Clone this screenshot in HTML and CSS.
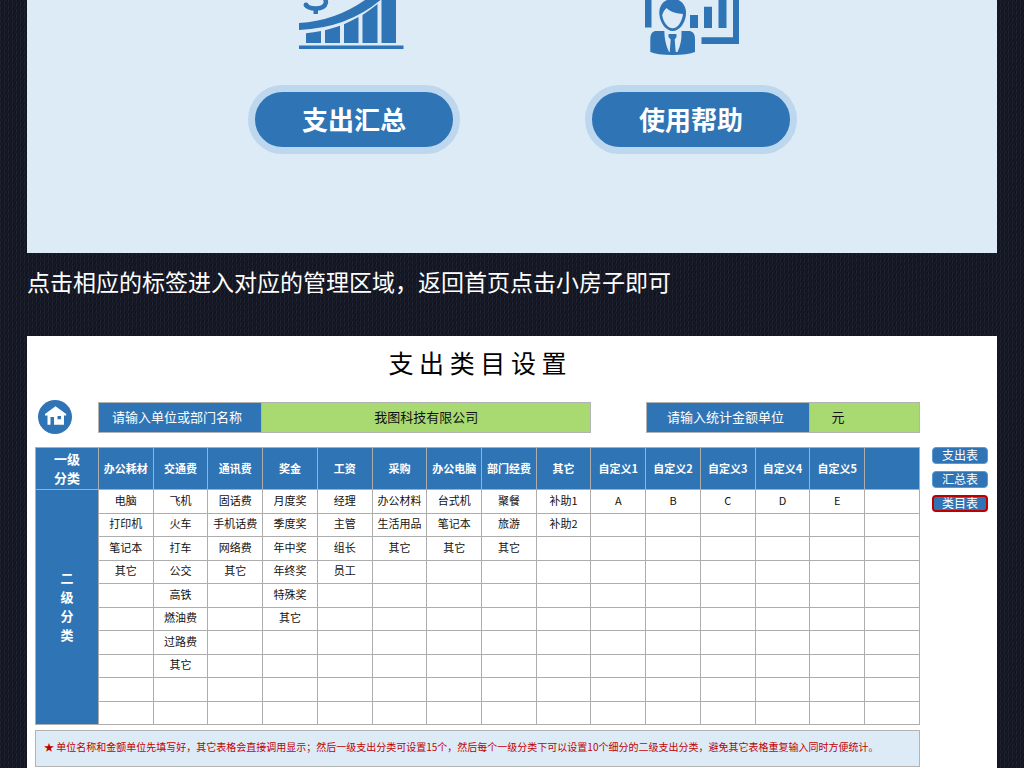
FILE: index.html
```html
<!DOCTYPE html>
<html lang="zh-CN">
<head>
<meta charset="utf-8">
<title>支出类目设置</title>
<link rel="stylesheet" href="styles.css">
</head>
<body>
<section class="menu">
  <div class="menu-item">
    <svg class="menu-icon" width="110" height="56" viewBox="300 0 110 56" aria-hidden="true">
      <path d="M300 45.500h104.500v3.500H300z"/>
      <path d="M307 33.200Q315 32.500 322 31v12h-15zM326 30.300Q333 28.500 341 25.800V43h-15zM345 24.200Q352 21 359.500 17v26H345zM363.500 15Q371 10 378.500 4v39h-15zM382.500 0H397v43h-14.500z"/>
      <path d="M300 23Q336 21 366 0H381.500Q348 28 300 30z"/>
      <path d="M306.500 4.200C309 9.500 325 10.500 326.800 3Q327.200 1.200 326 -1" fill="none" stroke="#2f74b5" stroke-width="4.500"/>
      <circle cx="307" cy="4.800" r="2.400"/>
      <path d="M314.500 8h4.500v6h-4.500z"/>
    </svg>
    <button class="pill" type="button">支出汇总</button>
  </div>
  <div class="menu-item">
    <svg class="menu-icon" width="98" height="56" viewBox="642 0 98 56" aria-hidden="true">
      <path d="M645 0h6.500v27.500H645zM690 15h8v13h-8zM704 6.700h8V28h-8zM718.500 0h8v28h-8zM733 0h6v44h-37.500v-6.800H733z"/>
      <path d="M667 0C661 3 659 8 659.300 14C660 23 666 31 672.700 31S685.500 23 686 14C686.300 8 684 3 678.500 0z"/>
      <path d="M666.500 8C671 12.500 677 13.500 683 14C682 22 677.500 28.300 672.700 28.300S663 22 662.200 15Q663 11 666.500 8z" fill="#ddebf7"/>
      <path d="M655 31h35q5 1 5 8v13q-7 3-22.500 3T650.300 52V39q0-7 4.700-8z"/>
      <path d="M664.300 31h17.200Q682 43 677.500 52h-8.500Q664.500 43 664.300 31z" fill="#ddebf7"/>
      <path d="M668.500 34h8v3l-1.800 2.500 1 12.500h-6l1-12.500-2.200-2.500z"/>
    </svg>
    <button class="pill" type="button">使用帮助</button>
  </div>
</section>

<p class="caption">点击相应的标签进入对应的管理区域，返回首页点击小房子即可</p>

<section class="sheet">
  <div class="main">
    <h1 class="title">支 出 类 目 设 置</h1>
    <form class="fields">
      <a class="home" href="#" aria-label="首页">
        <svg width="34" height="34" viewBox="0 0 34 34" aria-hidden="true">
          <circle cx="17" cy="17" r="17" fill="#2f74b5"/>
          <path d="M17.500 6.300L28.200 14v1.500H26v9.200H16V17h-3.500v7.700H9.500v-9.200H7V14zM19.500 16v3.200H23V16z" fill="#fff" fill-rule="evenodd"/>
        </svg>
      </a>
      <label class="field-label" for="unit">请输入单位或部门名称</label>
      <input class="field-input company" id="unit" type="text" value="我图科技有限公司">
      <label class="field-label currency-label" for="currency">请输入统计金额单位</label>
      <input class="field-input currency" id="currency" type="text" value="元">
    </form>
    <table class="cats">
      <colgroup><col class="side-col"><col span="15"></colgroup>
      <thead>
        <tr><th class="level">一级<br>分类</th><th>办公耗材</th><th>交通费</th><th>通讯费</th><th>奖金</th><th>工资</th><th>采购</th><th>办公电脑</th><th>部门经费</th><th>其它</th><th>自定义1</th><th>自定义2</th><th>自定义3</th><th>自定义4</th><th>自定义5</th><th></th></tr>
      </thead>
      <tbody>
        <tr><th class="level" rowspan="10">二<br>级<br>分<br>类</th><td>电脑</td><td>飞机</td><td>固话费</td><td>月度奖</td><td>经理</td><td>办公材料</td><td>台式机</td><td>聚餐</td><td>补助1</td><td>A</td><td>B</td><td>C</td><td>D</td><td>E</td><td></td></tr>
        <tr><td>打印机</td><td>火车</td><td>手机话费</td><td>季度奖</td><td>主管</td><td>生活用品</td><td>笔记本</td><td>旅游</td><td>补助2</td><td></td><td></td><td></td><td></td><td></td><td></td></tr>
        <tr><td>笔记本</td><td>打车</td><td>网络费</td><td>年中奖</td><td>组长</td><td>其它</td><td>其它</td><td>其它</td><td></td><td></td><td></td><td></td><td></td><td></td><td></td></tr>
        <tr><td>其它</td><td>公交</td><td>其它</td><td>年终奖</td><td>员工</td><td></td><td></td><td></td><td></td><td></td><td></td><td></td><td></td><td></td><td></td></tr>
        <tr><td></td><td>高铁</td><td></td><td>特殊奖</td><td></td><td></td><td></td><td></td><td></td><td></td><td></td><td></td><td></td><td></td><td></td></tr>
        <tr><td></td><td>燃油费</td><td></td><td>其它</td><td></td><td></td><td></td><td></td><td></td><td></td><td></td><td></td><td></td><td></td><td></td></tr>
        <tr><td></td><td>过路费</td><td></td><td></td><td></td><td></td><td></td><td></td><td></td><td></td><td></td><td></td><td></td><td></td><td></td></tr>
        <tr><td></td><td>其它</td><td></td><td></td><td></td><td></td><td></td><td></td><td></td><td></td><td></td><td></td><td></td><td></td><td></td></tr>
        <tr><td></td><td></td><td></td><td></td><td></td><td></td><td></td><td></td><td></td><td></td><td></td><td></td><td></td><td></td><td></td></tr>
        <tr><td></td><td></td><td></td><td></td><td></td><td></td><td></td><td></td><td></td><td></td><td></td><td></td><td></td><td></td><td></td></tr>
      </tbody>
    </table>
    <p class="note">★ 单位名称和金额单位先填写好，其它表格会直接调用显示；然后一级支出分类可设置15个，然后每个一级分类下可以设置10个细分的二级支出分类，避免其它表格重复输入同时方便统计。</p>
  </div>
  <nav class="tabs">
    <a class="tab" href="#">支出表</a>
    <a class="tab" href="#">汇总表</a>
    <a class="tab current" href="#" aria-current="page">类目表</a>
  </nav>
</section>
</body>
</html>
```
FILE: styles.css
```css
* {
  box-sizing: border-box;
}

body {
  margin: 0;
  padding: 0 27px;
  background-color: #171a26;
  background-image:
    repeating-linear-gradient(120deg, rgba(0, 0, 0, 0.25) 0 1px, transparent 1px 3px),
    repeating-linear-gradient(90deg, rgba(70, 78, 100, 0.16) 0 1px, transparent 1px 4px);
  font-family: "Noto Sans CJK SC", sans-serif;
  color: #111;
}

.menu {
  display: flex;
  justify-content: center;
  gap: 125px;
  padding: 0 0 99px 21px;
  background: #ddebf7;
}

.menu-item {
  display: flex;
  flex-direction: column;
  align-items: center;
  gap: 29px;
}

.menu-icon {
  display: block;
  fill: #2f74b5;
}

.pill {
  width: 212px;
  height: 69px;
  padding: 0 0 2px;
  border: 7px solid #bdd7ee;
  border-radius: 35px;
  background: #2f74b5;
  color: #fff;
  font: bold 26px "Noto Sans CJK SC", sans-serif;
}

.caption {
  margin: 0;
  padding: 11px 0 38px;
  color: #fff;
  font-size: 23px;
  font-weight: 400;
  line-height: 34px;
}

.sheet {
  display: flex;
  gap: 12px;
  padding: 0 9px 1px 8px;
  background: #fff;
}

.main {
  flex: 1;
  min-width: 0;
}

.title {
  margin: 0;
  padding: 7px 0 19px;
  font-size: 25px;
  font-weight: 400;
  line-height: 38px;
  text-align: center;
  color: #000;
}

.fields {
  display: grid;
  grid-template-columns: 63px repeat(15, minmax(0, 1fr));
  align-items: center;
  margin: 0 0 13px;
}

.home {
  display: block;
  height: 34px;
  padding-left: 3px;
}

.field-label,
.field-input {
  height: 31px;
  border: 1px solid #b3b3b3;
  font-size: 13px;
}

.field-label {
  grid-column: span 3;
  background: #2f74b5;
  color: #fff;
  line-height: 28px;
  padding-left: 13px;
}

.currency-label {
  grid-column: 12 / span 3;
  padding-left: 20px;
}

.field-input {
  width: 100%;
  padding: 0 21px 2px;
  border-left: 0;
  border-radius: 0;
  background: #a8da71;
  color: #111;
  font-family: inherit;
}

.company {
  grid-column: span 6;
  text-align: center;
}

.currency {
  grid-column: span 2;
}

.cats {
  width: 100%;
  border-collapse: collapse;
  table-layout: fixed;
  font-size: 11px;
  line-height: 16px;
}

.side-col {
  width: 63px;
}

.cats th,
.cats td {
  padding: 0;
  border: 1px solid #adadad;
  text-align: center;
  white-space: nowrap;
}

.cats td {
  height: 23px;
  padding-bottom: 4px;
}

.cats tr:nth-child(odd) td {
  height: 24px;
}

.cats th {
  padding-bottom: 2px;
  background: #2f74b5;
  color: #fff;
}

.cats thead th {
  height: 42px;
}

.cats .level {
  font-size: 13px;
  line-height: 19px;
}

.note {
  margin: 5px 0 0;
  padding: 0 8px 3px;
  border: 1px solid #b3b3b3;
  background: #ddebf7;
  color: #c00000;
  font-size: 10px;
  line-height: 32px;
}

.tabs {
  display: flex;
  flex-direction: column;
  gap: 7px;
  width: 56px;
  padding-top: 111px;
}

.tab {
  height: 17px;
  border: 1px solid #5b9bd5;
  border-radius: 4px;
  background: #2f74b5;
  color: #fff;
  font-size: 12px;
  line-height: 14px;
  text-align: center;
  text-decoration: none;
}

.current {
  border: 2px solid #c00000;
  line-height: 12px;
}
```
